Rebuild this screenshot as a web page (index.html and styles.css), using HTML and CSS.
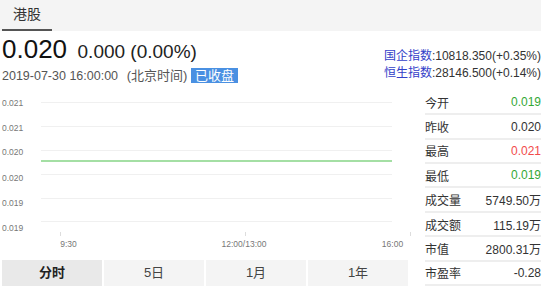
FILE: index.html
```html
<!DOCTYPE html>
<html lang="zh-CN">
<head>
    <meta charset="UTF-8">
    <title>港股行情</title>
    <link rel="stylesheet" href="styles.css">
</head>
<body>
    <div class="page">
        <div class="tabbar">
            <div class="tab active">港股</div>
        </div>

        <div class="quote">
            <div class="quote-left">
                <div class="price-line">
                    <span class="price">0.020</span>
                    <span class="change">0.000 (0.00%)</span>
                </div>
                <div class="time-line">
                    <span class="time">2019-07-30 16:00:00</span>
                    <span class="zone">(北京时间)</span>
                    <span class="badge">已收盘</span>
                </div>
            </div>
            <div class="indexes">
                <div><a class="index-name">国企指数</a>:10818.350(+0.35%)</div>
                <div><a class="index-name">恒生指数</a>:28146.500(+0.14%)</div>
            </div>
        </div>

        <div class="main">
            <div class="chart-col">
                <svg class="chart" width="412" height="169" viewBox="0 0 412 169">
                    <g class="grid">
                        <line x1="41" y1="11.5" x2="392" y2="11.5"></line>
                        <line x1="41" y1="35.5" x2="392" y2="35.5"></line>
                        <line x1="41" y1="59.5" x2="392" y2="59.5"></line>
                        <line x1="41" y1="83.5" x2="392" y2="83.5"></line>
                        <line x1="41" y1="107.5" x2="392" y2="107.5"></line>
                        <line x1="41" y1="130.5" x2="392" y2="130.5"></line>
                    </g>
                    <line class="price-path" x1="41" y1="70" x2="392" y2="70"></line>
                    <g class="y-labels">
                        <text x="2" y="15">0.021</text>
                        <text x="2" y="40">0.021</text>
                        <text x="2" y="64">0.020</text>
                        <text x="2" y="90">0.020</text>
                        <text x="2" y="115">0.019</text>
                        <text x="2" y="140">0.019</text>
                    </g>
                    <g class="ticks">
                        <line x1="60.5" y1="141" x2="60.5" y2="145"></line>
                        <line x1="245.5" y1="141" x2="245.5" y2="145"></line>
                        <line x1="410.5" y1="141" x2="410.5" y2="145"></line>
                    </g>
                    <g class="x-labels">
                        <text x="68.5" y="156">9:30</text>
                        <text x="244" y="156">12:00/13:00</text>
                        <text x="392.5" y="156">16:00</text>
                    </g>
                </svg>
                <div class="periods">
                    <div class="period active">分时</div>
                    <div class="period">5日</div>
                    <div class="period">1月</div>
                    <div class="period">1年</div>
                </div>
            </div>

            <table class="stats">
                <tr><td>今开</td><td class="up">0.019</td></tr>
                <tr><td>昨收</td><td>0.020</td></tr>
                <tr><td>最高</td><td class="down">0.021</td></tr>
                <tr><td>最低</td><td class="up">0.019</td></tr>
                <tr><td>成交量</td><td>5749.50万</td></tr>
                <tr><td>成交额</td><td>115.19万</td></tr>
                <tr><td>市值</td><td>2800.31万</td></tr>
                <tr><td>市盈率</td><td>-0.28</td></tr>
            </table>
        </div>
    </div>
</body>
</html>
```

FILE: styles.css
```css
body {
    margin: 0;
    font-family: "Liberation Sans", Arial, "Noto Sans CJK SC", sans-serif;
    color: #333;
    background: #fff;
}

.page {
    width: 541px;
}

.tabbar {
    height: 31px;
    background-color: #f4f4f4;
    padding-left: 2px;
    box-sizing: border-box;
}

.tab {
    width: 50px;
    height: 31px;
    line-height: 29px;
    font-size: 14px;
    text-align: center;
    box-sizing: border-box;
    color: #333;
}

.tab.active {
    border-bottom: 2px solid #555;
}

.quote {
    display: flex;
    justify-content: space-between;
    padding: 3px 0 0 2px;
    height: 54px;
}

.price-line {
    height: 30px;
    line-height: 30px;
    white-space: nowrap;
}

.price {
    font-size: 26px;
    color: #111;
}

.change {
    font-size: 19px;
    color: #222;
    margin-left: 6px;
}

.time-line {
    margin-top: 3px;
    height: 18px;
    line-height: 18px;
    font-size: 13px;
    color: #555;
    white-space: nowrap;
}

.time {
    font-size: 12.5px;
}

.zone {
    margin-left: 5px;
}

.badge {
    display: inline-block;
    line-height: 15px;
    padding: 0 4px;
    background-color: #4a90e2;
    color: #fff;
}

.indexes {
    padding-top: 14px;
    font-size: 12px;
    line-height: 17px;
    color: #333;
    text-align: right;
    white-space: nowrap;
}

.index-name {
    color: #3340c8;
}

.main {
    display: flex;
    margin-top: 3px;
}

.chart-col {
    width: 410px;
}

.chart {
    display: block;
    overflow: visible;
}

.grid line {
    stroke: #f0f0f0;
    stroke-width: 1;
}

.price-path {
    stroke: #86d486;
    stroke-width: 1.5;
}

.ticks line {
    stroke: #ddd;
    stroke-width: 1;
}

.y-labels text,
.x-labels text {
    font-size: 8.5px;
    fill: #777;
}

.x-labels text {
    text-anchor: middle;
}

.periods {
    display: flex;
    gap: 2px;
    padding-left: 2px;
}

.period {
    width: 100px;
    height: 26px;
    line-height: 26px;
    font-size: 13px;
    text-align: center;
    color: #444;
    background-color: #f4f4f4;
}

.period.active {
    background-color: #e9e9e9;
    font-weight: bold;
    color: #222;
}

.stats {
    width: 116px;
    margin-left: 15px;
    border-collapse: collapse;
    font-size: 12px;
}

.stats td {
    height: 22.3px;
    padding: 0;
    border-bottom: 2px solid #eee;
    color: #333;
    white-space: nowrap;
}

.stats td:last-child {
    text-align: right;
}

.stats .up {
    color: #35a835;
}

.stats .down {
    color: #f24b4b;
}
```
